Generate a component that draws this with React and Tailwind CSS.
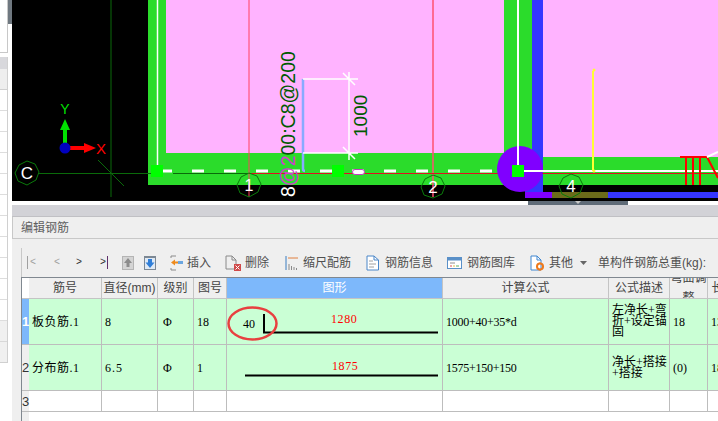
import React from "react";

const Canvas = () => (
  <svg className="block w-[706px] h-[201px]" viewBox="12 0 706 201" style={{ fontFamily: '"Liberation Sans", sans-serif' }}>
    <rect x="12" y="0" width="706" height="201" fill="#000" />
    <rect x="148" y="0" width="570" height="185" fill="#2bdc2b" />
    <rect x="166" y="0" width="338" height="153" fill="#ffb3ff" />
    <rect x="543" y="0" width="175" height="157" fill="#ffb3ff" />
    <rect x="532" y="0" width="11" height="192" fill="#3535ff" />
    <rect x="525" y="185" width="18" height="7" fill="#3535ff" />
    <rect x="525" y="192" width="27" height="6" fill="#8000ff" />
    <rect x="552" y="192" width="56" height="6" fill="#6b6b1a" />
    <rect x="608" y="192" width="110" height="6" fill="#3535ff" />

    <line x1="111" y1="0" x2="111" y2="197" stroke="#0a6a0a" />
    <line x1="98" y1="160" x2="124" y2="186" stroke="#0a6a0a" />
    <line x1="38" y1="173.5" x2="160" y2="173.5" stroke="#0a6a0a" />

    <line x1="157.5" y1="0" x2="157.5" y2="171" stroke="#fff" strokeWidth="1.5" />
    <line x1="160" y1="171" x2="500" y2="171" stroke="#fff" strokeWidth="3" strokeDasharray="12 20" />

    <line x1="249" y1="0" x2="249" y2="197" stroke="#ff4060" />
    <line x1="433" y1="0" x2="433" y2="197" stroke="#ff5070" strokeWidth="1.5" />
    <line x1="249" y1="173.5" x2="718" y2="173.5" stroke="#e01020" />

    <circle cx="520" cy="169" r="23" fill="#8000ff" />
    <line x1="518" y1="0" x2="518" y2="171" stroke="#fff" strokeWidth="2" />
    <line x1="522" y1="171" x2="718" y2="171" stroke="#fff" strokeWidth="2" />
    <line x1="593" y1="71" x2="593" y2="171" stroke="#ffff33" strokeWidth="2" />
    <circle cx="594" cy="70" r="1.5" fill="#ffff33" />
    <circle cx="594" cy="171" r="1.5" fill="#ffff33" />
    <rect x="151" y="165" width="12" height="12" fill="#00ff00" />
    <rect x="332" y="165" width="12" height="12" fill="#00ff00" />
    <rect x="512" y="165" width="12" height="12" fill="#00ff00" />
    <line x1="173" y1="173.5" x2="248" y2="173.5" stroke="#0a6a0a" />

    <path d="M680 157H707M686 157V185M693 157V185M700 157V185M707 157L718 178" stroke="#ff0000" strokeWidth="2" fill="none" />
    <line x1="707" y1="157" x2="718" y2="152" stroke="#fff" strokeWidth="2" />

    <path d="M303 79V169Q303 171 305 171" stroke="#88aaff" strokeWidth="2.5" fill="none" />
    <path d="M303 79H358M303 153H358M349 72V160M343 73L355 85M343 147L355 159" stroke="#fff" strokeWidth="1.5" fill="none" />
    <rect x="352.5" y="169.5" width="12" height="5" rx="2.5" fill="#fff" stroke="#c040c0" />

    <text transform="rotate(-90 295 197)" x="295" y="197" fontSize="19.5">
      <tspan fill="#fff">8</tspan>
      <tspan fill="#d040d0">@2</tspan>
      <tspan fill="#005a00">00:C8@200</tspan>
    </text>
    <text transform="rotate(-90 367 137)" x="367" y="137" fontSize="19" fill="#005a00">1000</text>

    <polygon points="27,161 35,164 39,172 36,180 27,185 18,181 15,173 19,165" fill="none" stroke="#0a7a0a" />
    <polygon points="249,173 257,176 261,184 258,192 249,197 240,193 237,185 241,177" fill="none" stroke="#0a7a0a" />
    <polygon points="433,175 441,178 445,186 442,194 433,198 424,195 421,187 425,179" fill="none" stroke="#0a7a0a" />
    <polygon points="571,174 579,177 583,185 580,193 571,198 562,194 559,186 563,178" fill="none" stroke="#0a7a0a" />
    <text x="27" y="179" fontSize="17" fill="#fff" textAnchor="middle">C</text>
    <text x="249" y="191" fontSize="16" fill="#fff" textAnchor="middle">1</text>
    <text x="433" y="193" fontSize="17" fill="#fff" textAnchor="middle">2</text>
    <text x="571" y="192" fontSize="17" fill="#fff" textAnchor="middle">4</text>

    <rect x="63" y="128" width="4" height="20" fill="#00e000" />
    <polygon points="65,119 60,130 70,130" fill="#00e000" />
    <rect x="65" y="146" width="21" height="4" fill="#ff0000" />
    <polygon points="84,143 96,148 84,153" fill="#ff0000" />
    <circle cx="65" cy="148" r="5.5" fill="#0000c0" />
    <text x="65" y="114" fontSize="14" fill="#00e000" textAnchor="middle">Y</text>
    <text x="101" y="154" fontSize="15" fill="#ff0000" textAnchor="middle">X</text>
  </svg>
);

const Ic = ({ w, children }) => (
  <svg width={w} height="16" viewBox={`0 0 ${w} 16`} className="block shrink-0">{children}</svg>
);

const Item = ({ cls, gap, icon, label }) => (
  <div className={`flex items-center ${cls} ${gap}`}>
    {icon}
    <span className="whitespace-nowrap">{label}</span>
  </div>
);

const nav = "font-['Liberation_Mono'] text-[10px] leading-none whitespace-nowrap";

const Toolbar = () => (
  <div className="h-[38px] pt-[9px] flex">
    <div className="h-[29px] flex items-center border-l border-[#c8c8c8] text-[12px] text-[#505050] pl-[5px]">
      <span className={`${nav} w-[9px] text-[#a0a0a0] flex items-center`}><span className="w-px h-[13px] bg-[#a0a0a0] mr-[2px]"></span>&lt;</span>
      <span className={`${nav} w-[6px] ml-[18px] text-[#a0a0a0]`}>&lt;</span>
      <span className={`${nav} w-[6px] ml-[16px] text-[#303030]`}>&gt;</span>
      <span className={`${nav} w-[9px] ml-[18px] text-[#303030] flex items-center`}>&gt;<span className="w-px h-[13px] bg-[#60306a] ml-[1px]"></span></span>
      <div className="ml-[13px]">
        <Ic w={12}>
          <rect x="0" y="1" width="12" height="14" fill="#b4b4b4" />
          <rect x="1" y="2" width="10" height="12" fill="#d4d4d4" />
          <path d="M6 3L10 8H7.5V12H4.5V8H2Z" fill="#8c8c8c" />
        </Ic>
      </div>
      <div className="ml-[10px]">
        <Ic w={12}>
          <rect x="0" y="1" width="12" height="14" fill="#7c8894" />
          <rect x="1" y="3" width="10" height="11" fill="#dfe9f4" />
          <path d="M6 13L10.5 7.5H8V4H4V7.5H1.5Z" fill="#2f7ed8" />
        </Ic>
      </div>
      <Item cls="ml-[14px]" gap="gap-[4px]" label="插入" icon={
        <Ic w={13}>
          <path d="M6 1H1V3M1 13V15H6" stroke="#8a8a8a" fill="none" />
          <path d="M1 7.5L5 4.5V6.5H8V8.5H5V10.5Z" fill="#ee8a1c" />
          <rect x="8" y="6" width="5" height="3" fill="#6aa6e0" />
        </Ic>
      } />
      <Item cls="ml-[14px]" gap="gap-[4px]" label="删除" icon={
        <Ic w={16}>
          <path d="M1 1H7L11 5V14H3" stroke="#8a8a8a" fill="none" />
          <path d="M1 1V14H3M7 1V5H11" stroke="#8a8a8a" fill="none" />
          <rect x="9" y="9" width="7" height="7" fill="#d04a4a" />
          <path d="M10.5 10.5L14.5 14.5M14.5 10.5L10.5 14.5" stroke="#fff" />
        </Ic>
      } />
      <Item cls="ml-[16px]" gap="gap-[4px]" label="缩尺配筋" icon={
        <Ic w={14}>
          <path d="M3 3H13" stroke="#e08040" />
          <path d="M1 1V15" stroke="#3a7cc0" />
          <path d="M4 9V15M6.5 11V15M9 12V15M11.5 13V15" stroke="#8a8a8a" />
        </Ic>
      } />
      <Item cls="ml-[15px]" gap="gap-[6px]" label="钢筋信息" icon={
        <Ic w={13}>
          <path d="M1 1H8L12.5 5V15H1Z" fill="#fff" stroke="#4a86c8" />
          <path d="M8 1V5H12.5" fill="none" stroke="#4a86c8" />
          <path d="M3 6H7M3 9H10M3 12H8" stroke="#a0a0a0" />
        </Ic>
      } />
      <Item cls="ml-[14px]" gap="gap-[5px]" label="钢筋图库" icon={
        <Ic w={15}>
          <rect x="0.5" y="2.5" width="14" height="11" fill="#fff" stroke="#5a90c8" />
          <rect x="0.5" y="2.5" width="14" height="3" fill="#5a90c8" />
          <path d="M3 8H8" stroke="#909090" />
          <path d="M3 11H5" stroke="#e05050" />
          <path d="M6 11H8" stroke="#e0c040" />
          <path d="M9 11H12" stroke="#60b060" />
        </Ic>
      } />
      <Item cls="ml-[15px]" gap="gap-[5px]" label="其他" icon={
        <Ic w={14}>
          <path d="M1 1H7L11 5V15H1Z" fill="#fff" stroke="#3f86d0" />
          <path d="M7 1V5H11" fill="none" stroke="#3f86d0" />
          <circle cx="10" cy="11.5" r="3" fill="none" stroke="#ee7a1c" strokeWidth="2" />
          <path d="M10 7.5V9M10 14V15.5M6 11.5H7.5M12.5 11.5H14" stroke="#ee7a1c" strokeWidth="1.5" />
        </Ic>
      } />
      <svg width="7" height="4" viewBox="0 0 7 4" className="ml-[7px] block shrink-0"><path d="M0 0H7L3.5 4Z" fill="#666" /></svg>
      <span className="ml-[11px] whitespace-nowrap">单构件钢筋总重(kg):</span>
    </div>
  </div>
);

const cols = [
  "w-[73px]", "w-[56px]", "w-[36px]", "w-[33px]", "w-[216px]", "w-[166px]", "w-[61px]", "w-[38px]", "w-[60px]",
];

const HCell = ({ w, cls = "", children }) => (
  <div className={`${w} h-full shrink-0 border-r border-[#c4c4c4] flex justify-center overflow-hidden ${cls}`}>{children}</div>
);

const Cell = ({ w, cls = "", children }) => (
  <div className={`${w} h-full shrink-0 border-r border-[#bdbdbd] flex items-center pl-[3px] ${cls}`}>{children}</div>
);

const cellFont = { fontFamily: '"Liberation Serif", "Noto Sans CJK SC", serif' };

const Row = ({ h, bg, head, headCls, v }) => (
  <div className={`flex ${h} border-b border-[#bdbdbd] ${bg}`}>
    <div className={`w-[7px] shrink-0 h-full flex items-center justify-center text-[13px] leading-none font-['Liberation_Sans'] ${headCls}`}>{head}</div>
    {cols.map((w, i) => (
      <Cell key={i} w={w} cls={i === 2 ? "pl-[5px]" : i === 4 ? "relative" : ""}>{v ? v[i] : null}</Cell>
    ))}
  </div>
);

const Shape = ({ box, children }) => (
  <svg viewBox={box} width="216" height="45" className="absolute left-0 top-0 overflow-visible" style={cellFont}>{children}</svg>
);

const Desc = ({ children }) => (
  <div className="w-[56px] break-all leading-[11px] text-[12px]">{children}</div>
);

const Table = () => (
  <div className="border-t border-l border-[#808890] h-[144px] overflow-hidden bg-white text-[12px] text-[#000]" style={cellFont}>
    <div className="flex h-[21px] border-b border-[#c4c4c4] bg-[#efefef] text-[#444] leading-[21px]" style={{ fontFamily: '"Liberation Sans", "Noto Sans CJK SC", sans-serif' }}>
      <div className="w-[7px] shrink-0 bg-white"></div>
      <HCell w={cols[0]}>筋号</HCell>
      <HCell w={cols[1]}>直径(mm)</HCell>
      <HCell w={cols[2]}>级别</HCell>
      <HCell w={cols[3]}>图号</HCell>
      <HCell w={cols[4]} cls="bg-[#7db8fb] text-white">图形</HCell>
      <HCell w={cols[5]}>计算公式</HCell>
      <HCell w={cols[6]}>公式描述</HCell>
      <div className={`${cols[7]} h-full shrink-0 border-r border-[#c4c4c4] overflow-hidden text-center leading-[20px] relative`}>
        <div className="absolute left-0 right-0 top-[-10px]">弯曲调整</div>
      </div>
      <HCell w={cols[8]}>长度(mm)</HCell>
    </div>
    <Row
      h="h-[46px]"
      bg="bg-[#caffd5]"
      head="1"
      headCls="bg-[#7db8fb] text-white font-bold"
      v={[
        <span className="tracking-[0.5px]">板负筋.1</span>,
        "8",
        "Φ",
        "18",
        <Shape box="227 299 216 45">
          <text x="243" y="328" fontSize="12" fill="#000">40</text>
          <path d="M264 314V332.5H438" fill="none" stroke="#000" strokeWidth="2" />
          <text x="331" y="323" fontSize="12" fill="#ff0000" letterSpacing="0.6">1280</text>
          <ellipse cx="252.5" cy="323.5" rx="24" ry="16" fill="none" stroke="#e84040" strokeWidth="2.5" />
        </Shape>,
        <span className="tracking-[-0.25px]">1000+40+35*d</span>,
        <Desc>左净长+弯折+设定锚固</Desc>,
        "18",
        "1320",
      ]}
    />
    <Row
      h="h-[46px]"
      bg="bg-[#caffd5]"
      head="2"
      headCls="bg-[#efefef] text-[#333]"
      v={[
        <span className="tracking-[0.5px]">分布筋.1</span>,
        <span className="tracking-[1px]">6.5</span>,
        "Φ",
        "1",
        <Shape box="227 345 216 45">
          <path d="M245 375.5H438" fill="none" stroke="#000" strokeWidth="2" />
          <text x="332" y="370" fontSize="12" fill="#ff0000" letterSpacing="0.6">1875</text>
        </Shape>,
        <span className="tracking-[-0.25px]">1575+150+150</span>,
        <Desc>净长+搭接+搭接</Desc>,
        "(0)",
        "1875",
      ]}
    />
    <Row h="h-[21px]" bg="bg-white" head="3" headCls="bg-[#efefef] text-[#333]" />
    <div className="w-[7px] h-[10px] bg-[#efefef]"></div>
  </div>
);

const LeftStrip = () => {
  const rows = Array.from({ length: 11 });
  return (
    <div className="w-[12px] shrink-0 h-full bg-white">
      <div className="flex h-[53px]">
        <div className="w-[8px] h-full border-r border-b border-[#c8c8c8]"></div>
        <div className="w-[4px] h-[24px] bg-[#6f7880]"></div>
      </div>
      <div className="h-[4px]"></div>
      <div className="w-[8px] border-r border-[#d0d0d0]">
        <div className="h-[12px] bg-[#d8d8dc]"></div>
        <div className="h-[21px] bg-[#eeeeee] border-b border-[#d0d0d0]"></div>
        {rows.map((_, i) => (
          <div key={i} className="h-[21px] border-b border-[#dddddd]"></div>
        ))}
        <div className="h-[21px] border-b border-[#d8d8d8] bg-[#f0f0f0]"></div>
        <div className="h-[21px] border-b border-[#d0d0d0] bg-[#f0f0f0]"></div>
      </div>
    </div>
  );
};

export default function App() {
  return (
    <div className="w-[718px] h-[421px] overflow-hidden flex bg-white" style={{ fontFamily: '"Liberation Sans", "Noto Sans CJK SC", sans-serif' }}>
      <LeftStrip />
      <div className="w-[706px] shrink-0 flex flex-col">
        <Canvas />
        <div className="h-[4px] bg-white pl-[516px]">
          <div className="w-[100px] h-full bg-[#5f6b78] flex justify-center">
            <svg width="6" height="3" viewBox="0 0 6 3" className="block"><path d="M0 0H6L3 3Z" fill="#c8c8c8" /></svg>
          </div>
        </div>
        <div className="h-[12px] bg-[#d2d2d7] border-b border-[#c0c0c4]"></div>
        <div className="h-[22px] bg-[#efefef] border-l border-b border-[#c8c8c8] pl-[8px] text-[12px] leading-[23px] text-[#606060]">编辑钢筋</div>
        <div className="flex-1 bg-[#efefef] pl-[9px] min-h-0">
          <Toolbar />
          <Table />
        </div>
      </div>
    </div>
  );
}
